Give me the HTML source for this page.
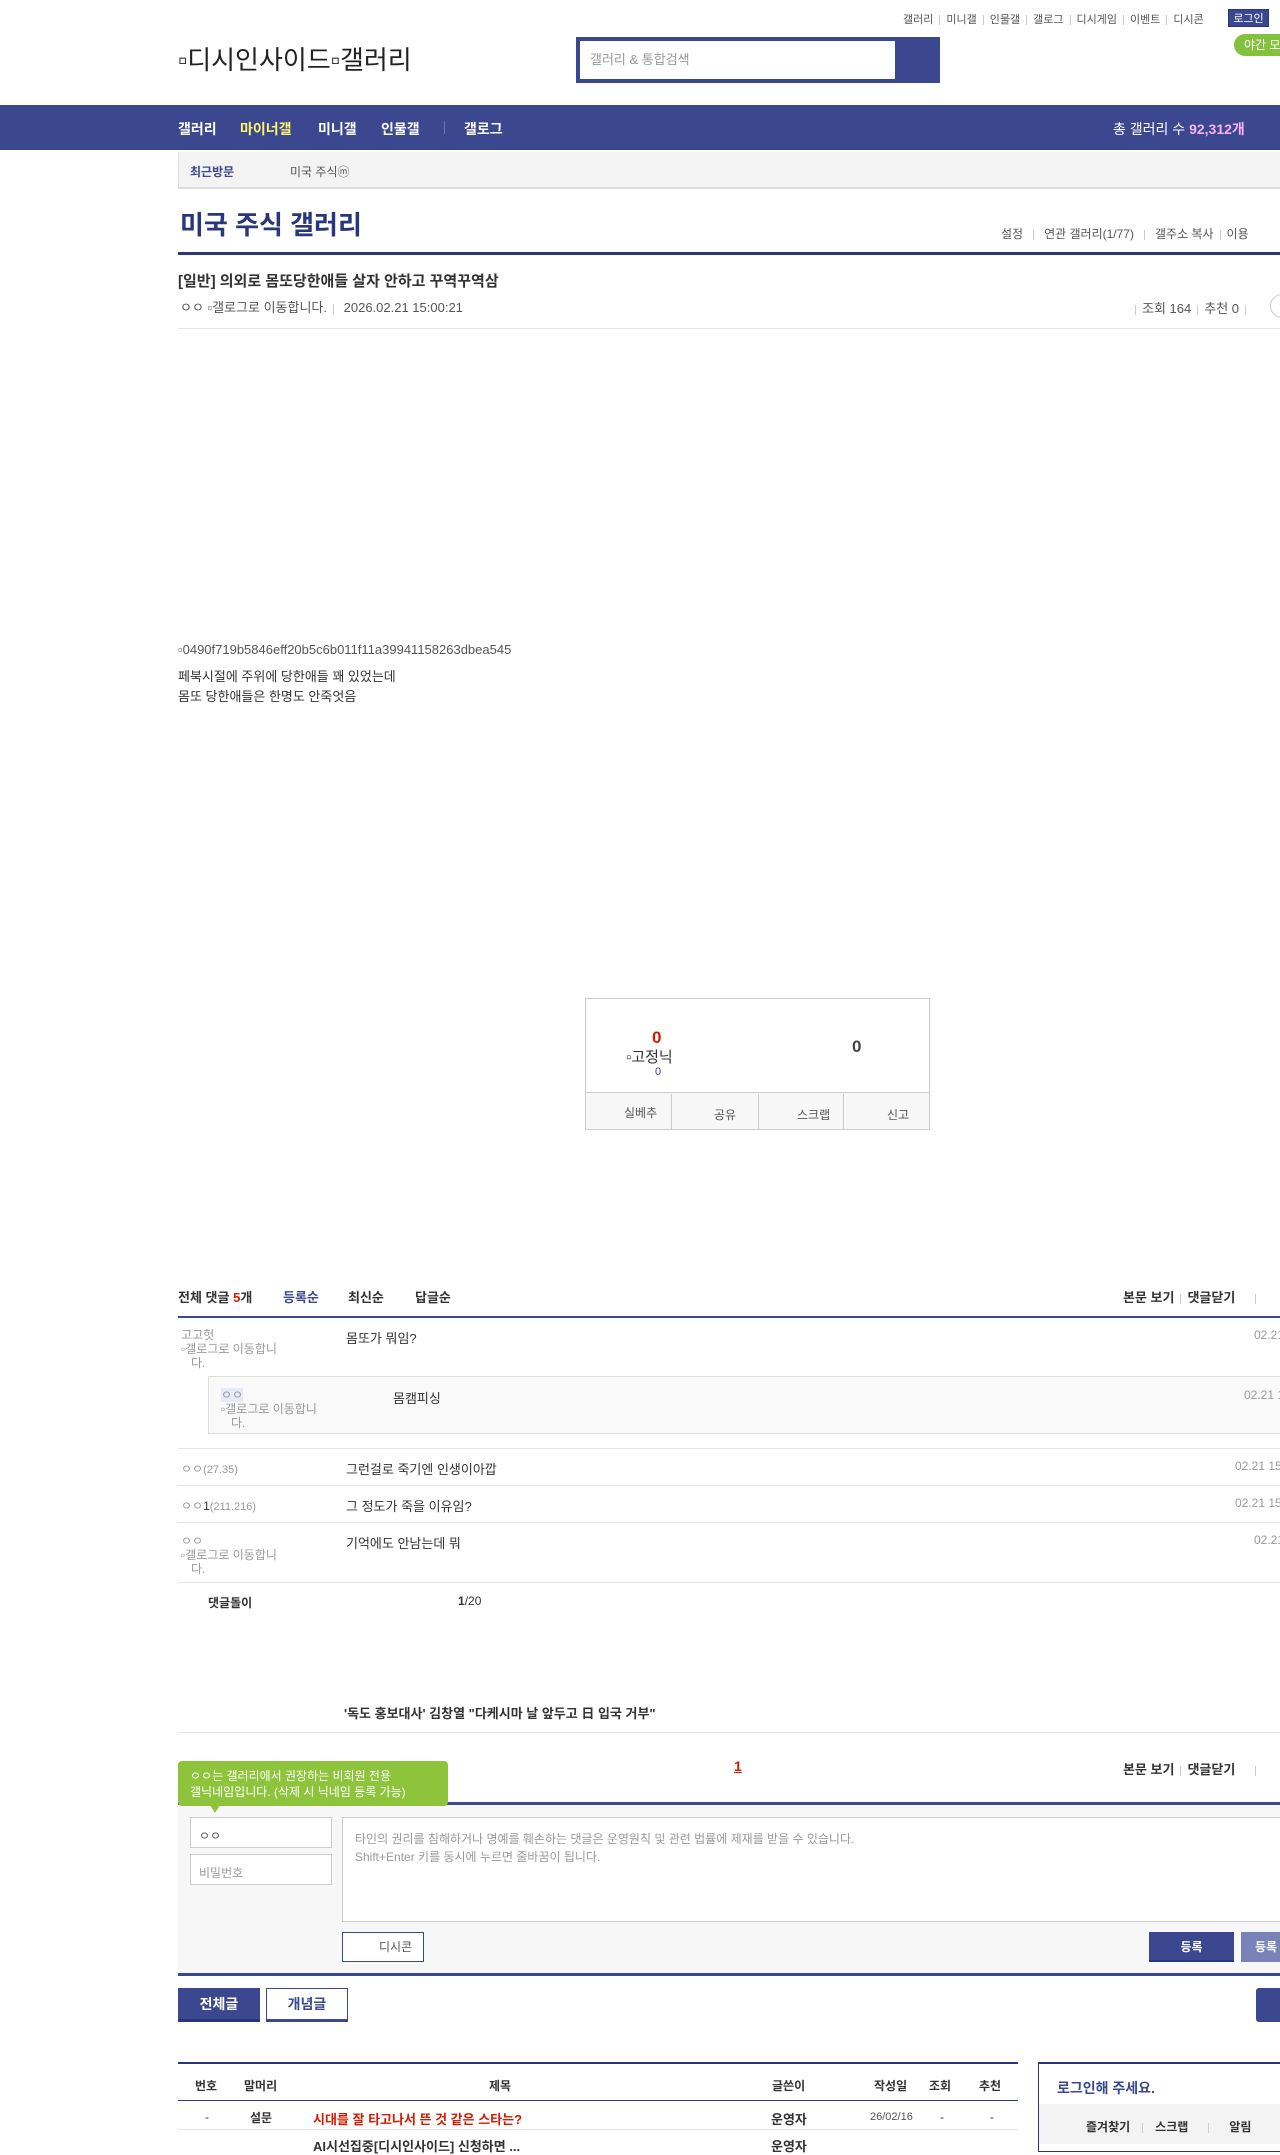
<!DOCTYPE html>
<html><head><meta charset="utf-8"><style>
*{margin:0;padding:0;box-sizing:border-box}
body{width:1280px;height:2142px;position:relative;overflow:hidden;background:#fff;font-family:"Liberation Sans","Noto Sans CJK KR",sans-serif;font-size:13px;color:#333}
.a{position:absolute;white-space:nowrap}
.nv{color:#3b4890}
.b{font-weight:bold}
.g{color:#999}
.hl{position:absolute;left:178px;right:0;height:1px;background:#e5e5e5}
.ut{font-size:11px;color:#555}
.sep{display:inline-block;width:1px;height:10px;background:#ccc;margin:0 6px;vertical-align:middle}
.ipt{position:absolute;background:#fff;border:1px solid #ccc}
</style></head><body>
<!-- top util -->
<div class="a ut" style="top:11px;left:903px">갤러리<span class="sep"></span>미니갤<span class="sep"></span>인물갤<span class="sep"></span>갤로그<span class="sep"></span>디시게임<span class="sep"></span>이벤트<span class="sep"></span>디시콘</div>
<div class="a" style="left:1228px;top:9px;width:41px;height:18px;background:#3b4890;color:#fff;font-size:11px;text-align:center;line-height:18px;border:1px solid #29367c">로그인</div>
<div class="a" style="left:1234px;top:34px;width:60px;height:22px;background:#84c13d;border-radius:11px 0 0 11px;color:#fff;font-size:12px;line-height:22px;padding-left:10px">야간 모드</div>
<div class="a" style="left:178px;top:40px;font-size:26px;color:#222">▫디시인사이드▫갤러리</div>
<div class="a" style="left:576px;top:37px;width:364px;height:46px;background:#3b4890"></div>
<div class="a" style="left:580px;top:41px;width:315px;height:38px;background:#fff;color:#999;font-size:13px;line-height:38px;padding-left:10px">갤러리 &amp; 통합검색</div>
<!-- nav -->
<div class="a" style="left:0;top:105px;width:1280px;height:45px;background:#3b4890"></div>
<div class="a b" style="left:178px;top:119px;color:#fff;font-size:14px">갤러리</div>
<div class="a b" style="left:240px;top:119px;color:#fff46d;font-size:14px">마이너갤</div>
<div class="a b" style="left:318px;top:119px;color:#fff;font-size:14px">미니갤</div>
<div class="a b" style="left:381px;top:119px;color:#fff;font-size:14px">인물갤</div>
<div class="a" style="left:444px;top:121px;width:1px;height:13px;background:#6a75b0"></div>
<div class="a b" style="left:464px;top:119px;color:#fff;font-size:14px">갤로그</div>
<div class="a" style="left:1113px;top:119px;color:#fff;font-size:14px">총 갤러리 수 <b style="color:#f8b3f0">92,312개</b></div>
<!-- recent -->
<div class="a" style="left:178px;top:152px;width:1102px;height:37px;background:#f3f3f3;border-left:1px solid #ddd;border-bottom:2px solid #ddd"></div>
<div class="a b nv" style="left:190px;top:163px;font-size:12px">최근방문</div>
<div class="a" style="left:290px;top:163px;font-size:12px;color:#555">미국 주식ⓜ</div>
<!-- title -->
<div class="a b" style="left:180px;top:205px;font-size:26px;color:#29367c">미국 주식 갤러리</div>
<div class="a" style="left:1001px;top:225px;font-size:12px;color:#555">설정<span class="sep" style="margin:0 10px"></span>연관 갤러리(1/77)<span class="sep" style="margin:0 10px"></span>갤주소 복사<span class="sep"></span>이용</div>
<div class="a" style="left:178px;top:252px;width:1102px;height:3px;background:#29367c"></div>
<div class="a b" style="left:178px;top:270px;font-size:15px;color:#333">[일반] 의외로 몸또당한애들 살자 안하고 꾸역꾸역삼</div>
<div class="a" style="left:180px;top:297px;font-size:13px;color:#555">ㅇㅇ ▫갤로그로 이동합니다.<span class="sep"></span> 2026.02.21 15:00:21</div>
<div class="a" style="left:1129px;top:298px;font-size:13px;color:#555"><span class="sep"></span>조회 164<span class="sep"></span>추천 0<span class="sep"></span></div>
<div class="a" style="left:1270px;top:294px;width:24px;height:24px;border:1px solid #ccc;border-radius:12px"></div>
<div class="hl" style="top:328px"></div>
<!-- body -->
<div class="a" style="left:178px;top:642px;font-size:13px;color:#555">▫0490f719b5846eff20b5c6b011f11a39941158263dbea545</div>
<div class="a" style="left:178px;top:667px;font-size:13px;color:#333;line-height:20px">페북시절에 주위에 당한애들 꽤 있었는데<br>몸또 당한애들은 한명도 안죽엇음</div>
<!-- recommend -->
<div class="a" style="left:585px;top:998px;width:345px;height:132px;border:1px solid #ccc"></div>
<div class="a" style="left:585px;top:1092px;width:345px;height:1px;background:#ccc"></div>
<div class="a" style="left:586px;top:1093px;width:343px;height:36px;background:#f7f7f7"></div>
<div class="a b" style="left:652px;top:1028px;color:#d31900;font-size:17px">0</div>
<div class="a" style="left:626px;top:1046px;font-size:15px;color:#333">▫고정닉</div>
<div class="a" style="left:655px;top:1066px;font-size:11px;color:#3b4890">0</div>
<div class="a b" style="left:852px;top:1037px;font-size:17px;color:#444">0</div>
<div class="a" style="left:671px;top:1094px;width:1px;height:35px;background:#ccc"></div>
<div class="a" style="left:758px;top:1094px;width:1px;height:35px;background:#ccc"></div>
<div class="a" style="left:843px;top:1094px;width:1px;height:35px;background:#ccc"></div>
<div class="a" style="left:624px;top:1104px;font-size:12px;color:#555">실베추</div>
<div class="a" style="left:714px;top:1106px;font-size:12px;color:#555">공유</div>
<div class="a" style="left:797px;top:1106px;font-size:12px;color:#555">스크랩</div>
<div class="a" style="left:887px;top:1106px;font-size:12px;color:#555">신고</div>
<!-- comments -->
<div class="a b" style="left:178px;top:1287px;font-size:13px">전체 댓글 <span style="color:#d31900">5</span>개</div>
<div class="a b nv" style="left:283px;top:1287px;font-size:13px">등록순</div>
<div class="a b" style="left:348px;top:1287px;font-size:13px">최신순</div>
<div class="a b" style="left:415px;top:1287px;font-size:13px">답글순</div>
<div class="a b" style="left:1123px;top:1287px;font-size:13px">본문 보기<span class="sep"></span>댓글닫기<span class="sep" style="margin-left:20px"></span></div>
<div class="a" style="left:178px;top:1316px;width:1102px;height:2px;background:#3b4890"></div>
<div class="a g" style="left:181px;top:1328px;font-size:12px;line-height:14px">고고헛<br>▫갤로그로 이동합니<br>&nbsp;&nbsp;&nbsp;다.</div>
<div class="a" style="left:346px;top:1328px">몸또가 뭐임?</div>
<div class="a g" style="left:1254px;top:1328px;font-size:12px">02.21</div>
<div class="a" style="left:208px;top:1376px;width:1072px;height:58px;background:#f9f9f9;border:1px solid #ddd;border-right:none"></div>
<div class="a g" style="left:221px;top:1388px;font-size:12px;line-height:14px"><span style="background:#e6eaf8">ㅇㅇ</span><br>▫갤로그로 이동합니<br>&nbsp;&nbsp;&nbsp;다.</div>
<div class="a" style="left:393px;top:1388px">몸캠피싱</div>
<div class="a g" style="left:1244px;top:1388px;font-size:12px">02.21 15</div>
<div class="hl" style="top:1448px"></div>
<div class="a g" style="left:181px;top:1460px;font-size:12px">ㅇㅇ<span style="font-size:11px">(27.35)</span></div>
<div class="a" style="left:346px;top:1459px">그런걸로 죽기엔 인생이아깝</div>
<div class="a g" style="left:1235px;top:1459px;font-size:12px">02.21 15</div>
<div class="hl" style="top:1485px"></div>
<div class="a g" style="left:181px;top:1497px;font-size:12px">ㅇㅇ<span style="color:#333">1</span><span style="font-size:11px">(211.216)</span></div>
<div class="a" style="left:346px;top:1496px">그 정도가 죽을 이유임?</div>
<div class="a g" style="left:1235px;top:1496px;font-size:12px">02.21 15</div>
<div class="hl" style="top:1522px"></div>
<div class="a g" style="left:181px;top:1534px;font-size:12px;line-height:14px">ㅇㅇ<br>▫갤로그로 이동합니<br>&nbsp;&nbsp;&nbsp;다.</div>
<div class="a" style="left:346px;top:1533px">기억에도 안남는데 뭐</div>
<div class="a g" style="left:1254px;top:1533px;font-size:12px">02.21</div>
<div class="hl" style="top:1582px"></div>
<div class="a b" style="left:208px;top:1594px;font-size:12px">댓글돌이</div>
<div class="a" style="left:458px;top:1594px;font-size:12px"><b>1</b>/20</div>
<div class="a b" style="left:344px;top:1703px;font-size:13px">'독도 홍보대사' 김창열 "다케시마 날 앞두고 日 입국 거부"</div>
<div class="hl" style="top:1732px"></div>
<div class="a b" style="left:734px;top:1758px;color:#d31900;font-size:14px;text-decoration:underline">1</div>
<div class="a b" style="left:1123px;top:1759px;font-size:13px">본문 보기<span class="sep"></span>댓글닫기<span class="sep" style="margin-left:20px"></span></div>
<!-- write -->
<div class="a" style="left:178px;top:1802px;width:1102px;height:3px;background:#3b4890"></div>
<div class="a" style="left:178px;top:1805px;width:1102px;height:168px;background:#f7f7f7"></div>
<div class="a" style="left:178px;top:1973px;width:1102px;height:3px;background:#3b4890"></div>
<div class="a" style="left:178px;top:1761px;width:270px;height:45px;background:#8ec43b;border-radius:4px;color:#fff;font-size:12px;line-height:16px;padding:7px 12px">ㅇㅇ는 갤러리에서 권장하는 비회원 전용<br>갤닉네임입니다. (삭제 시 닉네임 등록 가능)</div>
<div class="a" style="left:210px;top:1805px;width:0;height:0;border-left:5px solid transparent;border-right:5px solid transparent;border-top:8px solid #8ec43b"></div>
<div class="ipt" style="left:190px;top:1817px;width:142px;height:31px;font-size:12px;color:#555;padding:9px 8px">ㅇㅇ</div>
<div class="ipt" style="left:190px;top:1854px;width:142px;height:31px;font-size:12px;color:#999;padding:9px 8px">비밀번호</div>
<div class="ipt" style="left:342px;top:1817px;width:940px;height:105px;font-size:12px;color:#999;padding:12px 12px;line-height:18px">타인의 권리를 침해하거나 명예를 훼손하는 댓글은 운영원칙 및 관련 법률에 제재를 받을 수 있습니다.<br>Shift+Enter 키를 동시에 누르면 줄바꿈이 됩니다.</div>
<div class="a" style="left:342px;top:1932px;width:82px;height:30px;background:#fff;border:1px solid #3b4890;font-size:12px;color:#555;line-height:28px;padding-left:36px">디시콘</div>
<div class="a b" style="left:1149px;top:1932px;width:85px;height:30px;background:#3b4890;color:#fff;font-size:12px;line-height:30px;text-align:center;border-bottom:2px solid #29367c">등록</div>
<div class="a b" style="left:1241px;top:1932px;width:60px;height:30px;background:#7a83b8;color:#fff;font-size:12px;line-height:30px;padding-left:14px">등록</div>
<div class="a b" style="left:178px;top:1988px;width:82px;height:34px;background:#3b4890;color:#fff;font-size:14px;line-height:32px;text-align:center;border-bottom:3px solid #29367c">전체글</div>
<div class="a b" style="left:266px;top:1988px;width:82px;height:34px;background:#fff;border:1px solid #3b4890;border-bottom:3px solid #3b4890;color:#3b4890;font-size:14px;line-height:30px;text-align:center">개념글</div>
<div class="a" style="left:1256px;top:1988px;width:30px;height:34px;background:#3b4890;border-radius:3px 0 0 3px"></div>
<!-- table -->
<div class="a" style="left:178px;top:2062px;width:840px;height:2px;background:#29367c"></div>
<div class="a b" style="left:195px;top:2077px;font-size:12px;color:#333">번호</div>
<div class="a b" style="left:244px;top:2077px;font-size:12px">말머리</div>
<div class="a b" style="left:489px;top:2077px;font-size:12px">제목</div>
<div class="a b" style="left:772px;top:2077px;font-size:12px">글쓴이</div>
<div class="a b" style="left:874px;top:2077px;font-size:12px">작성일</div>
<div class="a b" style="left:929px;top:2077px;font-size:12px">조회</div>
<div class="a b" style="left:979px;top:2077px;font-size:12px">추천</div>
<div class="a" style="left:178px;top:2100px;width:840px;height:1px;background:#29367c"></div>
<div class="a" style="left:205px;top:2110px;font-size:12px">-</div>
<div class="a b" style="left:250px;top:2109px;font-size:12px">설문</div>
<div class="a b" style="left:313px;top:2109px;font-size:13px;color:#d31900">시대를 잘 타고나서 뜬 것 같은 스타는?</div>
<div class="a b" style="left:771px;top:2109px;font-size:13px">운영자</div>
<div class="a" style="left:870px;top:2111px;font-size:11px;color:#555">26/02/16</div>
<div class="a" style="left:940px;top:2110px;font-size:12px">-</div>
<div class="a" style="left:990px;top:2110px;font-size:12px">-</div>
<div class="a" style="left:178px;top:2129px;width:840px;height:1px;background:#e5e5e5"></div>
<div class="a b" style="left:313px;top:2136px;font-size:13px;color:#333">AI시선집중[디시인사이드] 신청하면 ...</div>
<div class="a b" style="left:771px;top:2136px;font-size:13px">운영자</div>
<!-- login box -->
<div class="a" style="left:1038px;top:2062px;width:250px;height:90px;border:1px solid #29367c;border-top:2px solid #29367c"></div>
<div class="a b nv" style="left:1057px;top:2078px;font-size:14px">로그인해 주세요.</div>
<div class="a" style="left:1039px;top:2104px;width:241px;height:40px;background:#f3f3f3"></div>
<div class="a b" style="left:1086px;top:2118px;font-size:12px">즐겨찾기<span class="sep" style="margin:0 12px"></span>스크랩<span class="sep" style="margin:0 20px"></span>알림</div>
</body></html>
